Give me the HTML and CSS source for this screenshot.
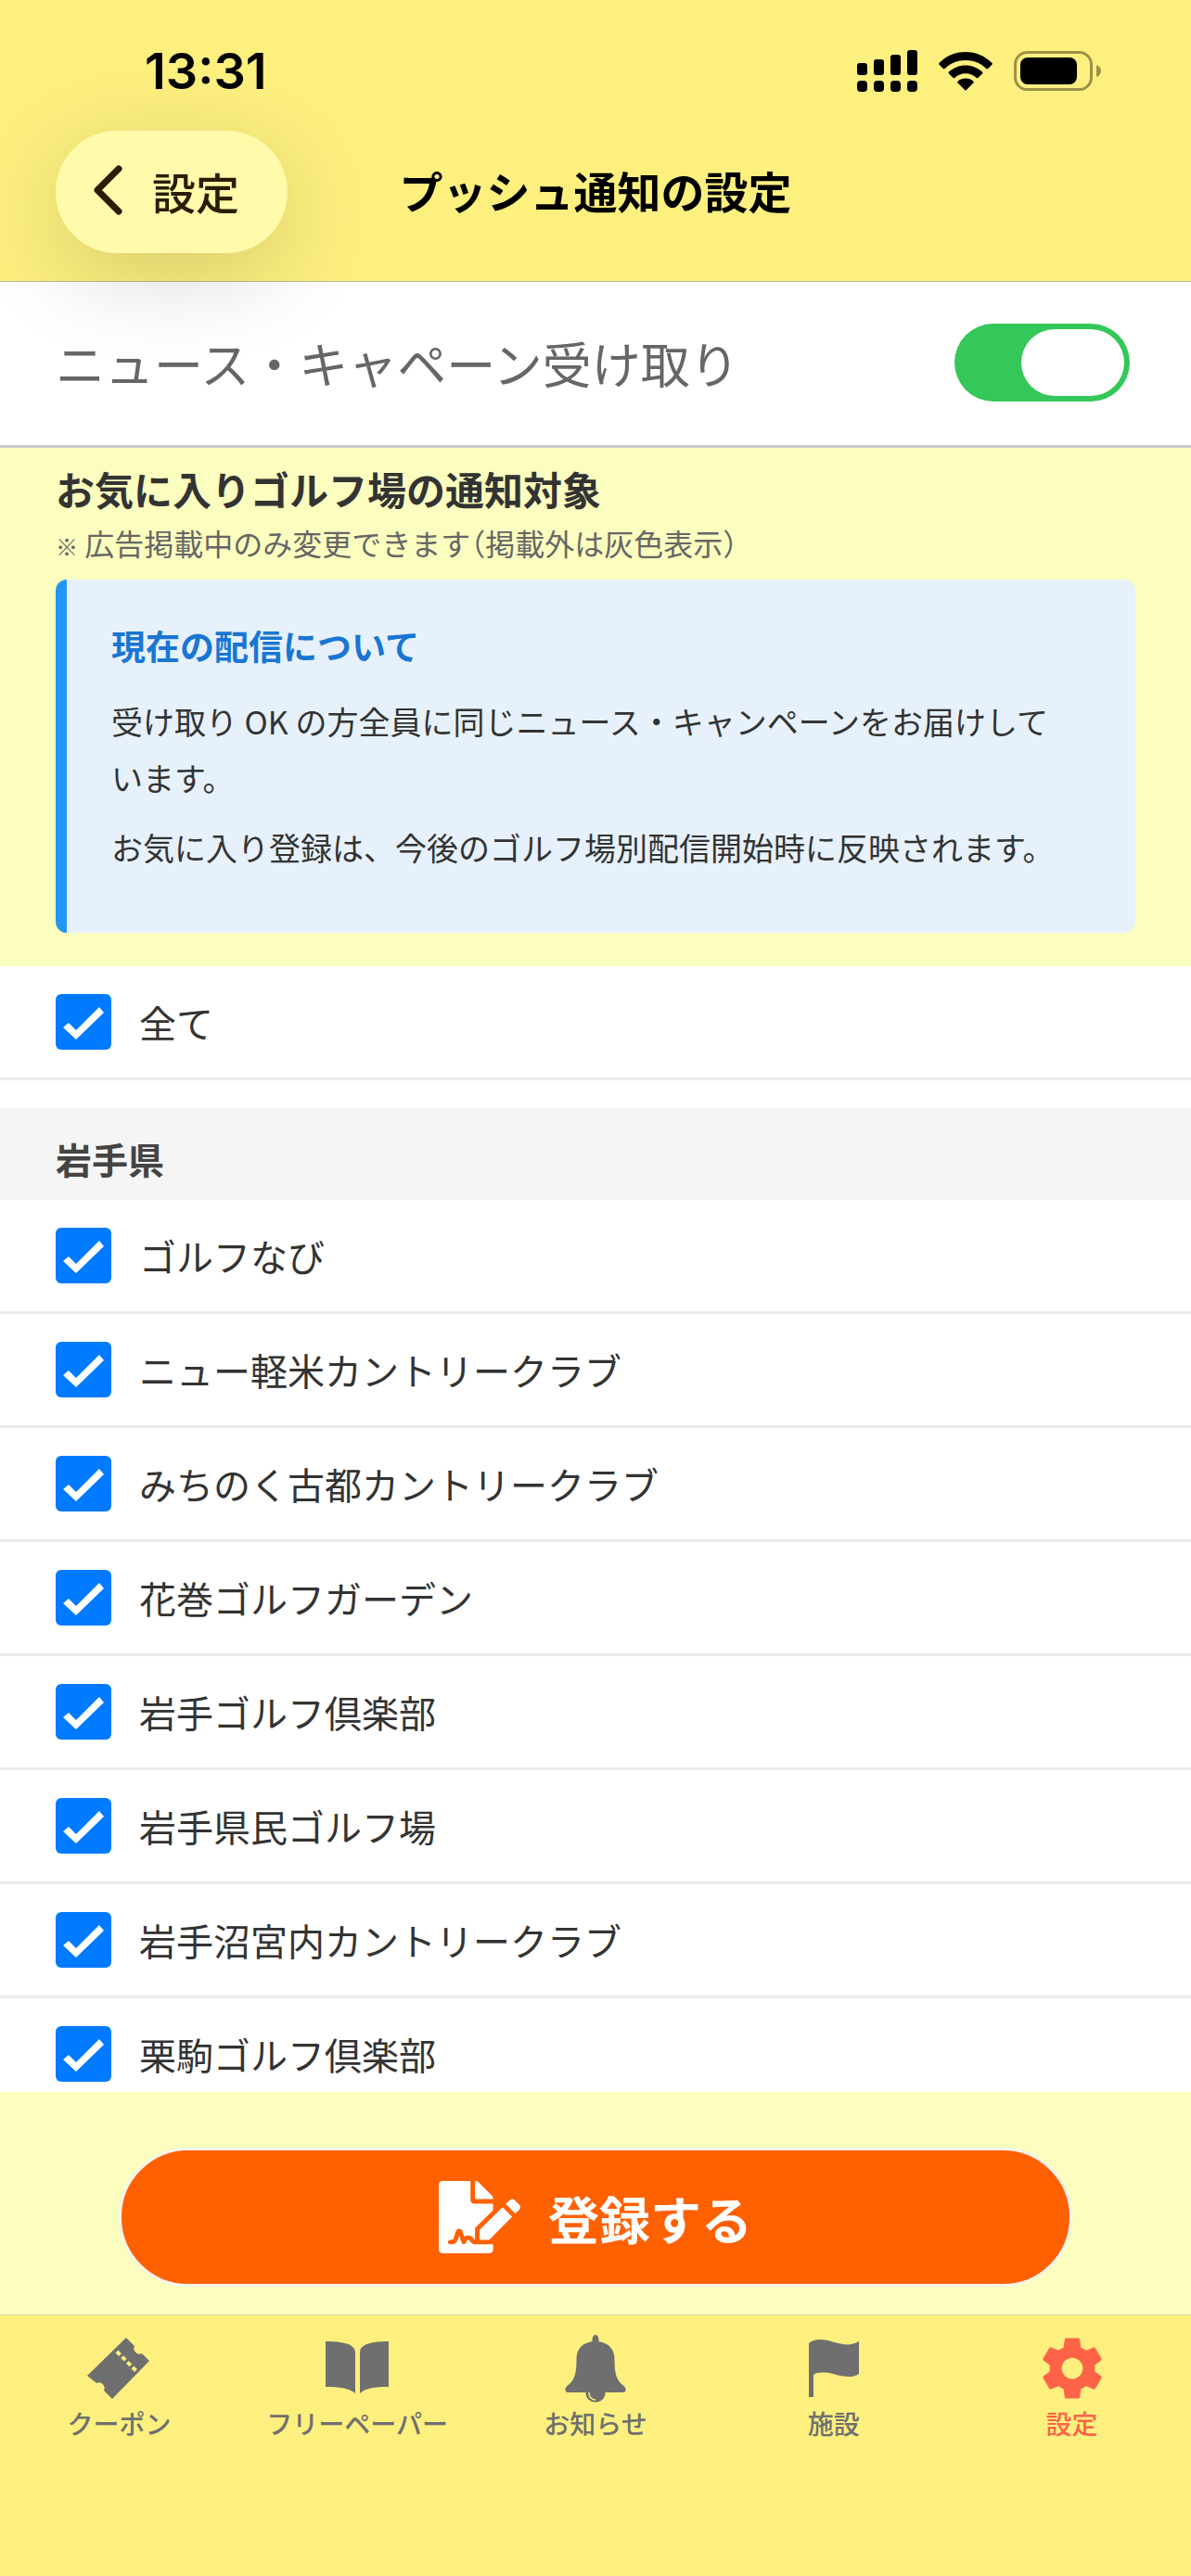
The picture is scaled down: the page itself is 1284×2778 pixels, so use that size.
FILE: index.html
```html
<!DOCTYPE html>
<html lang="ja">
<head>
    <meta charset="UTF-8">
    <meta name="viewport" content="width=device-width, initial-scale=1.0">
    <title>プッシュ通知の設定</title>
    <link rel="stylesheet" href="styles.css">
</head>
<body>

    <!-- Status bar + navigation -->
    <header class="header">
        <div class="status-bar">
            <span class="clock">13:31</span>
            <div class="status-icons">
                <svg width="65" height="46" viewBox="0 0 65 46">
                    <rect x="0" y="14" width="11" height="13" rx="3"/>
                    <rect x="18" y="10" width="11" height="17" rx="3"/>
                    <rect x="36" y="5" width="11" height="22" rx="3"/>
                    <rect x="54" y="0" width="11" height="27" rx="3"/>
                    <rect x="0" y="33" width="11" height="12" rx="4"/>
                    <rect x="18" y="33" width="11" height="12" rx="4"/>
                    <rect x="36" y="33" width="11" height="12" rx="4"/>
                    <rect x="54" y="33" width="11" height="12" rx="4"/>
                </svg>
                <svg width="58" height="42" viewBox="0 0 58 42">
                    <path d="M29 0C18 0 8 4.500 .600 11.800c-.600.600-.600 1.300 0 1.900l4.200 4.200c.600.600 1.300.600 1.900 0C12.600 12.200 20.500 9 29 9s16.400 3.200 22.300 8.900c.600.600 1.300.600 1.900 0l4.200-4.200c.600-.600.600-1.300 0-1.900C50 4.500 40 0 29 0z"/>
                    <path d="M29 14.500c-7 0-13.300 2.700-18 7.100-.600.600-.600 1.300 0 1.900l4.400 4.300c.600.600 1.200.600 1.800.100C20.300 25 24.500 23.300 29 23.300s8.700 1.700 11.800 4.600c.600.500 1.200.500 1.800-.100l4.400-4.300c.600-.600.600-1.300 0-1.900-4.700-4.400-11-7.100-18-7.100z"/>
                    <path d="M29 28.500c-3.200 0-6.200 1.200-8.400 3.200-.600.500-.600 1.200 0 1.800l7.500 7.500c.600.600 1.200.600 1.800 0l7.500-7.500c.600-.600.600-1.300 0-1.800-2.200-2-5.200-3.200-8.400-3.200z"/>
                </svg>
                <svg width="95" height="44" viewBox="0 0 95 44">
                    <rect x="1.500" y="1.500" width="82" height="40" rx="13" fill="none" stroke="#9c904a" stroke-width="3"/>
                    <rect x="7" y="7" width="61" height="29" rx="8"/>
                    <path d="M89 15c3 1 5 3.500 5 6.500s-2 5.500-5 6.500z" fill="#9c904a"/>
                </svg>
            </div>
        </div>
        <nav class="nav-bar">
            <a href="#" class="back-button">
                <svg width="32" height="54" viewBox="0 0 32 54">
                    <path d="M28 4L5 27l23 23" fill="none" stroke="#2a1d00" stroke-width="7" stroke-linecap="round" stroke-linejoin="round"/>
                </svg>
                設定
            </a>
            <h1 class="nav-title">プッシュ通知の設定</h1>
        </nav>
    </header>

    <main class="content">
        <div class="news-row">
            <label for="news-toggle">ニュース・キャペーン受け取り</label>
            <input type="checkbox" class="toggle" id="news-toggle" checked>
        </div>

        <section class="target">
            <h2 class="target-title">お気に入りゴルフ場の通知対象</h2>
            <p class="target-note"><span class="mark">※</span> 広告掲載中のみ変更できます（掲載外は灰色表示）</p>
            <div class="info-box">
                <h3>現在の配信について</h3>
                <p>受け取り OK の方全員に同じニュース・キャンペーンをお届けしています。</p>
                <p>お気に入り登録は、今後のゴルフ場別配信開始時に反映されます。</p>
            </div>
        </section>

        <div class="check-list">
            <label class="check-row all"><input type="checkbox" checked>全て</label>

            <h2 class="prefecture">岩手県</h2>
            <label class="check-row"><input type="checkbox" checked>ゴルフなび</label>
            <label class="check-row"><input type="checkbox" checked>ニュー軽米カントリークラブ</label>
            <label class="check-row"><input type="checkbox" checked>みちのく古都カントリークラブ</label>
            <label class="check-row"><input type="checkbox" checked>花巻ゴルフガーデン</label>
            <label class="check-row"><input type="checkbox" checked>岩手ゴルフ倶楽部</label>
            <label class="check-row"><input type="checkbox" checked>岩手県民ゴルフ場</label>
            <label class="check-row"><input type="checkbox" checked>岩手沼宮内カントリークラブ</label>
            <label class="check-row"><input type="checkbox" checked>栗駒ゴルフ倶楽部</label>
        </div>
    </main>

    <div class="submit-area">
        <button type="submit" class="submit-button">
            <svg width="88" height="78" viewBox="0 0 576 512" fill="#fff">
                <path d="M218.170 424.140c-2.950-5.920-8.090-6.520-10.170-6.520s-7.220.590-10.020 6.190l-7.670 15.340c-6.370 12.780-25.030 11.370-29.480-2.090L144 386.590l-10.610 31.880c-5.890 17.660-22.380 29.530-41 29.530H80c-8.840 0-16-7.160-16-16s7.160-16 16-16h12.390c4.830 0 9.110-3.080 10.640-7.660l18.190-54.640c3.300-9.810 12.440-16.410 22.780-16.410s19.480 6.590 22.770 16.410l13.880 41.640c19.750-16.190 54.060-9.700 66 14.160 1.890 3.780 5.490 5.950 9.360 6.260v-82.120l128-127.090V160H248c-13.200 0-24-10.800-24-24V0H24C10.700 0 0 10.700 0 24v464c0 13.300 10.700 24 24 24h336c13.300 0 24-10.700 24-24v-40l-128-.110c-16.120-.310-30.580-9.280-37.830-23.750zM384 121.900c0-6.300-2.500-12.400-7-16.900L279.100 7c-4.500-4.500-10.600-7-17-7H256v128h128v-6.100zm-96 225.060V416h68.990l161.680-162.780-67.880-67.880L288 346.960zm280.540-179.630l-31.870-31.870c-9.940-9.940-26.070-9.940-36.010 0l-27.250 27.250 67.880 67.880 27.250-27.250c9.950-9.940 9.950-26.070 0-36.010z"/>
            </svg>
            登録する
        </button>
    </div>

    <!-- Bottom tabs -->
    <nav class="tab-bar">
        <a href="#" class="tab">
            <svg width="78" height="78" viewBox="0 0 78 78">
                <path d="M47 6l9 9a6 6 0 0 0 8 8l8 8L32 72l-9-9a6 6 0 0 0-8-8L5 47z"/>
                <path d="M37 21l21 21" fill="none" stroke="#fdf07f" stroke-width="4" stroke-dasharray="5 3"/>
            </svg>
            クーポン
        </a>
        <a href="#" class="tab">
            <svg width="78" height="78" viewBox="0 0 78 78">
                <path d="M5 10c12 0 32 1 32 12v44C30 60 19 59 5 59zM73 10c-12 0-31 1-31 12v44c6-6 17-7 31-7z"/>
            </svg>
            フリーペーパー
        </a>
        <a href="#" class="tab">
            <svg width="78" height="78" viewBox="0 0 78 78">
                <path d="M39 3c-2 0-3.500 2-3.500 5v2C24 12 18.500 19 18.500 29c0 16-2 23-10 29-3 3-3 7 1 7h19c0 6 4 10.500 10.500 10.500S49.500 71 49.500 65h19c4 0 4-4 1-7-8-6-10-13-10-29 0-10-5.500-17-17-19V8c0-3-1.500-5-3.500-5z"/>
                <path d="M32 65c0 5 3 8 7 8" fill="none" stroke="#fdf07f" stroke-width="1.500"/>
            </svg>
            お知らせ
        </a>
        <a href="#" class="tab">
            <svg width="78" height="78" viewBox="0 0 78 78">
                <path d="M12 12c4-4 12-5 21-3 13 4 23 7 33 1v35c-7 5-17 3-28 0-9-2-17-2-21 1v24h-5z"/>
            </svg>
            施設
        </a>
        <a href="#" class="tab active">
            <svg width="78" height="78" viewBox="0 0 24 24">
                <path d="M19.430 12.980c.040-.320.070-.640.070-.980s-.030-.660-.070-.980l2.110-1.650c.190-.150.240-.420.120-.640l-2-3.460c-.120-.220-.390-.300-.610-.220l-2.490 1c-.520-.400-1.080-.730-1.690-.980l-.380-2.650C14.460 2.180 14.250 2 14 2h-4c-.250 0-.460.180-.490.420l-.380 2.650c-.610.250-1.170.590-1.690.980l-2.490-1c-.230-.090-.490 0-.610.220l-2 3.460c-.130.220-.070.490.120.640l2.110 1.650c-.040.320-.070.650-.070.980s.030.660.070.980l-2.110 1.650c-.190.150-.240.420-.120.640l2 3.460c.120.220.390.300.610.220l2.490-1c.520.400 1.080.730 1.690.980l.380 2.650c.030.240.240.420.490.420h4c.250 0 .460-.180.490-.420l.380-2.650c.610-.250 1.170-.590 1.690-.980l2.490 1c.230.090.490 0 .610-.220l2-3.460c.120-.220.070-.490-.120-.640l-2.110-1.650zM12 15.500c-1.930 0-3.500-1.570-3.500-3.500s1.570-3.500 3.500-3.500 3.500 1.570 3.500 3.500-1.570 3.500-3.500 3.500z"/>
            </svg>
            設定
        </a>
    </nav>

</body>
</html>
```
FILE: styles.css
```css
* {
    box-sizing: border-box;
}
body {
    margin: 0;
    height: 100vh;
    display: flex;
    flex-direction: column;
    background-color: #fdf07f;
    color: #333;
    font-family: "Noto Sans CJK JP", sans-serif;
}
h1, h2, h3, p {
    margin: 0;
}
a {
    color: inherit;
    text-decoration: none;
}
svg {
    display: block;
}

/* Header */
.header {
    position: relative;
    z-index: 1;
    border-bottom: 1px solid #bdb78a;
}
.status-bar {
    display: flex;
    justify-content: space-between;
    align-items: center;
    height: 141px;
    padding: 12px 96px 0 156px;
}
.clock {
    font-family: Inter, sans-serif;
    font-size: 54px;
    font-weight: 600;
    color: #000;
}
.status-icons {
    display: flex;
    align-items: center;
    gap: 23px;
}
.nav-bar {
    display: grid;
    grid-template-columns: 1fr auto 1fr;
    align-items: center;
    padding: 0 60px 30px;
}
.back-button {
    justify-self: start;
    display: flex;
    align-items: center;
    gap: 32px;
    height: 132px;
    padding: 0 52px 4px 40px;
    border-radius: 66px;
    background-color: #fffbab;
    box-shadow: 0 24px 100px rgba(0, 0, 0, 0.16);
    color: #2a1d00;
    font-size: 47px;
    font-weight: 500;
}
.nav-title {
    padding-bottom: 6px;
    color: #000;
    font-size: 47px;
    font-weight: 700;
}

/* Scrolling content */
.content {
    flex: 1;
    min-height: 0;
    overflow-y: auto;
    scrollbar-width: none;
    background-color: #fff;
}
.news-row {
    display: flex;
    justify-content: space-between;
    align-items: center;
    height: 179px;
    padding: 0 66px 3px 60px;
    border-bottom: 3px solid #ccc;
    color: #666;
    font-size: 53px;
}
.toggle {
    appearance: none;
    width: 189px;
    height: 84px;
    margin: 0;
    padding: 6px;
    border-radius: 42px;
    background-color: #ccc;
}
.toggle::before {
    content: "";
    display: block;
    width: 111px;
    height: 72px;
    border-radius: 36px;
    background-color: #fff;
}
.toggle:checked {
    background-color: #34c759;
}
.toggle:checked::before {
    margin-left: auto;
}
.target {
    padding: 14px 60px 36px;
    background-color: #fbfebe;
}
.target-title {
    font-size: 42px;
    font-weight: 700;
    line-height: 60px;
}
.target-note {
    margin-bottom: 8px;
    color: #666;
    font-size: 32px;
    line-height: 57px;
    font-feature-settings: "halt";
}
.mark {
    font-size: 24px;
}
.info-box {
    padding: 46px 72px 48px 48px;
    border-left: 12px solid #2196f3;
    border-radius: 12px;
    background-color: #e6f1fb;
    font-size: 34px;
    line-height: 61px;
}
.info-box h3 {
    margin-bottom: 26px;
    color: #1976d2;
    font-size: 37px;
    font-weight: 700;
    line-height: 50px;
}
.info-box p {
    margin-bottom: 14px;
}

/* Check list */
.check-row {
    display: flex;
    align-items: center;
    gap: 30px;
    height: 123px;
    padding: 0 60px;
    border-bottom: 3px solid #ebebeb;
    font-size: 40px;
}
.check-row.all {
    margin-bottom: 30px;
}
.check-row input {
    appearance: none;
    width: 60px;
    height: 60px;
    margin: 0;
    border: 3px solid #007aff;
    border-radius: 6px;
}
.check-row input:checked {
    border: none;
    background-color: #007aff;
}
.check-row input:checked::before {
    content: "";
    display: block;
    width: 60px;
    height: 60px;
    background-color: #fff;
    clip-path: polygon(8px 36px, 14px 31px, 22px 39px, 47px 14px, 52px 20px, 22px 49px);
}
.prefecture {
    padding: 24px 60px 15px;
    background-color: #f5f5f5;
    color: #444;
    font-size: 39px;
    font-weight: 700;
    line-height: 60px;
}

/* Submit */
.submit-area {
    padding: 60px 10% 30px;
    border-bottom: 1px solid #ddd8a0;
    background-color: #fbfebe;
}
.submit-button {
    display: flex;
    justify-content: center;
    align-items: center;
    gap: 30px;
    width: 100%;
    height: 150px;
    border: 3px solid #f7f3ec;
    border-radius: 75px;
    background-color: #ff6000;
    color: #fff;
    font-family: inherit;
    font-size: 55px;
    font-weight: 700;
}

/* Tabs */
.tab-bar {
    display: flex;
    padding: 18px 0 144px;
}
.tab {
    flex: 1;
    display: flex;
    flex-direction: column;
    align-items: center;
    color: #6f6f6f;
    fill: currentColor;
    font-size: 28px;
    font-weight: 500;
    line-height: 41px;
}
.tab.active {
    color: #ff6347;
}
```
